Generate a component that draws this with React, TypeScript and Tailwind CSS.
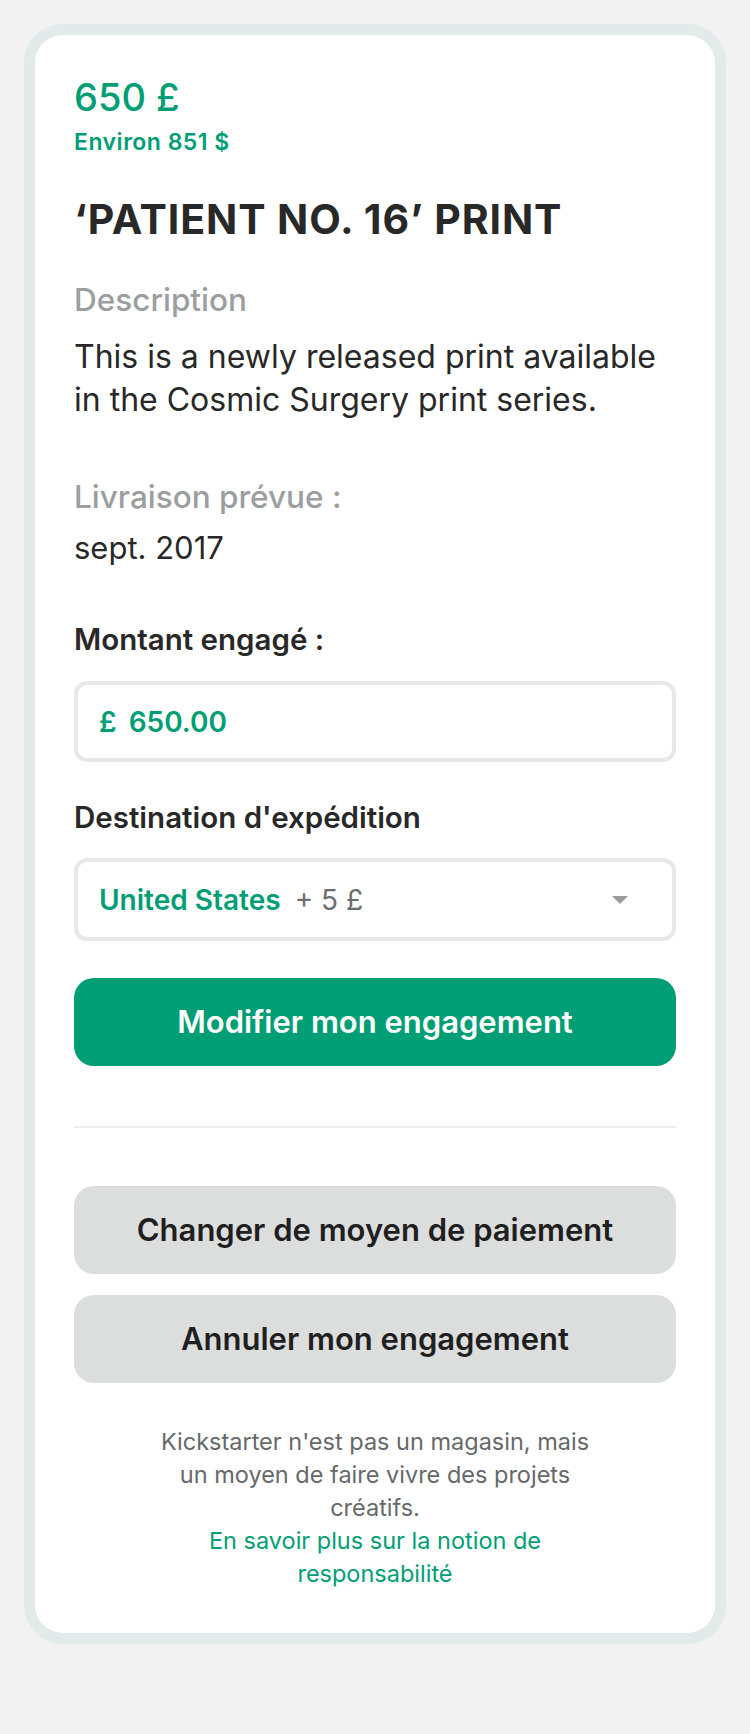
export default function App() {
  return (
    <div
      className="min-h-[1734px] bg-[#f2f2f2] px-[24px] pt-[24px]"
      style={{ fontFamily: "Inter, 'Noto Sans', sans-serif" }}
    >
      <div className="rounded-[38px] bg-[#e3ebea] p-[11px]">
        <div className="rounded-[28px] bg-white px-[39px] pt-[39px] pb-[43px]">
          <div className="text-[38px] leading-[46px] font-medium text-[#009e74]">650 £</div>
          <div className="mt-[8px] text-[23px] leading-[28px] font-semibold tracking-[0.5px] text-[#009e74]">
            Environ 851 $
          </div>

          <h1 className="mt-[39px] text-[41px] leading-[48px] font-bold tracking-[0.9px] text-[#282828]">
            ‘PATIENT NO. 16’ PRINT
          </h1>

          <div className="mt-[35px] text-[31.5px] leading-[43px] font-medium text-[#9b9e9e]">
            Description
          </div>
          <p className="mt-[14px] text-[32px] leading-[43px] text-[#282828]">
            This is a newly released print available in the Cosmic Surgery print series.
          </p>

          <div className="mt-[54px] text-[31.5px] leading-[43px] font-medium text-[#9b9e9e]">
            Livraison prévue :
          </div>
          <div className="mt-[8px] text-[31px] leading-[43px] text-[#282828]">sept. 2017</div>

          <div className="mt-[50px] text-[29.5px] leading-[40px] font-semibold text-[#282828]">
            Montant engagé :
          </div>
          <div className="mt-[22px] flex h-[81px] items-center rounded-[13px] border-[4px] border-[#e8e8e8] px-[21px] text-[28px] leading-[40px] font-semibold text-[#009e74]">
            <span>£</span>
            <span className="ml-[12px]">650.00</span>
          </div>

          <div className="mt-[35px] text-[29.5px] leading-[40px] font-semibold text-[#282828]">
            Destination d'expédition
          </div>
          <div className="mt-[21px] flex h-[83px] items-center rounded-[13px] border-[4px] border-[#e8e8e8] pl-[21px] pr-[44px] text-[28px] leading-[40px]">
            <span className="font-semibold text-[#009e74]">United States</span>
            <span className="ml-[14px] text-[#6b6e6e]">+ 5 £</span>
            <svg className="ml-auto" width="16" height="8" viewBox="0 0 16 8">
              <path d="M0 0h16L8 8z" fill="#9b9b9b" />
            </svg>
          </div>

          <button className="mt-[37px] flex h-[88px] w-full items-center justify-center rounded-[20px] bg-[#009e74] text-[31px] font-semibold text-white">
            Modifier mon engagement
          </button>

          <div className="mt-[60px] h-[2px] bg-[#ededed]" />

          <div className="mt-[58px] flex flex-col gap-[21px]">
            <button className="flex h-[88px] w-full items-center justify-center rounded-[20px] bg-[#dcdddd] text-[31px] font-semibold text-[#1f1f1f]">
              Changer de moyen de paiement
            </button>
            <button className="flex h-[88px] w-full items-center justify-center rounded-[20px] bg-[#dcdddd] text-[31px] font-semibold text-[#1f1f1f]">
              Annuler mon engagement
            </button>
          </div>

          <div className="mx-auto mt-[42px] max-w-[445px] text-center text-[23.5px] leading-[33px] text-[#656969]">
            <p>Kickstarter n'est pas un magasin, mais un moyen de faire vivre des projets créatifs.</p>
            <p className="text-[#009e74]">En savoir plus sur la notion de responsabilité</p>
          </div>
        </div>
      </div>
    </div>
  );
}
